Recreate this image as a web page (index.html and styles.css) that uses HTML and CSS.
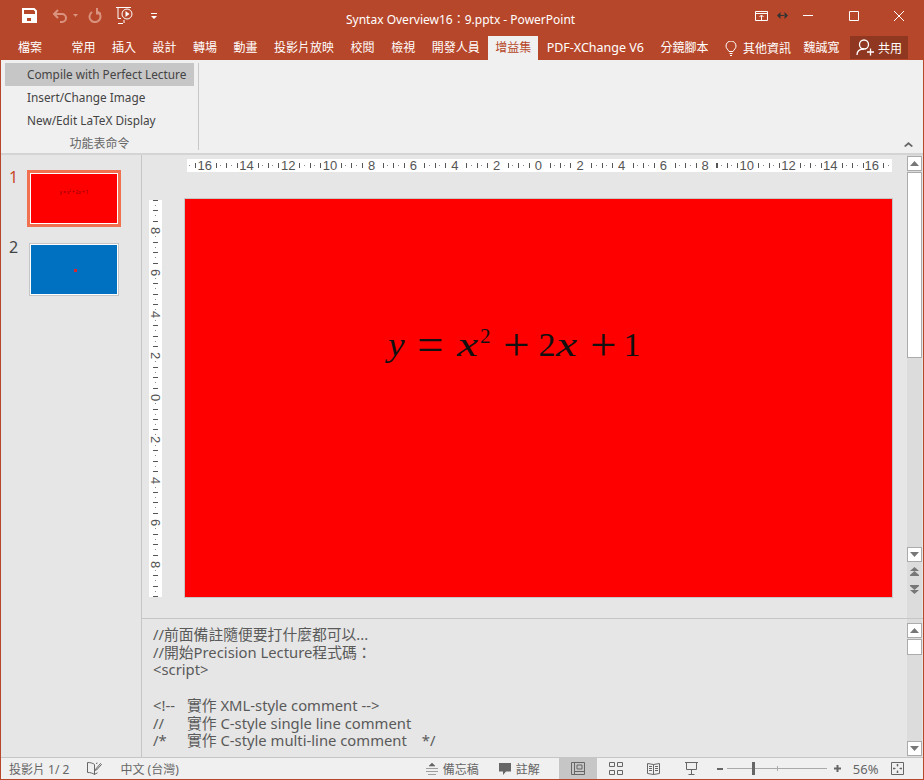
FILE: index.html
```html
<!DOCTYPE html>
<html>
<head>
<meta charset="utf-8">
<title>Syntax Overview16 - PowerPoint</title>
<link rel="stylesheet" href="styles.css">
</head>
<body>
<div class="window">

  <div class="titlebar">
    <div class="qat">
      <svg class="qat-save" width="15" height="15" viewBox="0 0 15 15"><path d="M1 1h11l2 2v11H1z" fill="none" stroke="#fff" stroke-width="2"/><rect x="1" y="6" width="13" height="8" fill="#fff"/><rect x="5" y="10" width="4" height="3" fill="#b7472a"/></svg>
      <svg class="qat-undo" width="16" height="14" viewBox="0 0 16 14"><path d="M6 1 2 5l4 4M2 5h8a4 4 0 0 1 0 8H8" fill="none" stroke="#d9937f" stroke-width="2"/></svg>
      <svg class="qat-caret" width="5" height="3" viewBox="0 0 5 3"><path d="M0 0h5L2.500 3z" fill="#d9937f"/></svg>
      <svg class="qat-redo" width="14" height="15" viewBox="0 0 14 15"><path d="M4 4A5.500 5.500 0 1 0 9 3.500M9 0v5.500H13" fill="none" stroke="#d9937f" stroke-width="2"/></svg>
      <svg class="qat-show" width="17" height="19" viewBox="0 0 17 19"><path d="M0 1.500h15M2 1.500v11h3M7 17.500H2M8 14v3" fill="none" stroke="#fff"/><circle cx="11" cy="8" r="5" fill="none" stroke="#fff"/><path d="M9.500 5v6l4-3z" fill="#fff"/></svg>
      <svg class="qat-more" width="6" height="6" viewBox="0 0 6 6"><path d="M0 0h6v1H0zM0 3h6L3 6z" fill="#fff"/></svg>
    </div>
    <div class="doc-title">Syntax Overview16：9.pptx - PowerPoint</div>
    <div class="win-btns">
      <svg class="win-display" width="13" height="10" viewBox="0 0 13 10"><path d="M.5.500h12v9H.5zM0 2.500h13M6.500 9V4.500M4.500 6l2-2 2 2" fill="none" stroke="#fff"/></svg>
      <svg class="win-resize" width="11" height="7" viewBox="0 0 11 7"><path d="M3.500 0v7L0 3.500zM7.500 0v7L11 3.500zM3 3h5v1H3z" fill="#333"/></svg>
      <svg class="win-min" width="10" height="1" viewBox="0 0 10 1"><path d="M0 0h10v1H0z" fill="#fff"/></svg>
      <svg class="win-max" width="10" height="10" viewBox="0 0 10 10"><path d="M.5.500h9v9h-9z" fill="none" stroke="#fff"/></svg>
      <svg class="win-close" width="10" height="10" viewBox="0 0 10 10"><path d="M0 0l10 10M10 0 0 10" stroke="#fff" fill="none"/></svg>
    </div>
  </div>

  <div class="tabbar">
    <span class="tab tab-file">檔案</span>
    <span class="tab">常用</span>
    <span class="tab">插入</span>
    <span class="tab">設計</span>
    <span class="tab">轉場</span>
    <span class="tab">動畫</span>
    <span class="tab">投影片放映</span>
    <span class="tab">校閱</span>
    <span class="tab">檢視</span>
    <span class="tab">開發人員</span>
    <span class="tab tab-active">增益集</span>
    <span class="tab tab-latin">PDF-XChange V6</span>
    <span class="tab">分鏡腳本</span>
    <span class="tell-me">
      <svg width="12" height="15" viewBox="0 0 12 15"><path d="M4 10.500C3 8.500 1 7.500 1 5a5 5 0 0 1 10 0c0 2.500-2 3.500-3 5.500zM4.500 12.500h3M5 14.500h2" fill="none" stroke="#fff"/></svg>
      其他資訊
    </span>
    <span class="user">魏誠寬</span>
    <span class="share">
      <svg width="20" height="17" viewBox="0 0 20 17"><circle cx="8" cy="5.500" r="4.500" fill="none" stroke="#fff" stroke-width="1.300"/><path d="M1 16c0-4 3-6 7-6M11 13h7M14.500 9.500v7" fill="none" stroke="#fff" stroke-width="1.300"/></svg>
      共用
    </span>
  </div>

  <div class="ribbon">
    <div class="ribbon-group">
      <div class="ribbon-btn ribbon-btn-on">Compile with Perfect Lecture</div>
      <div class="ribbon-btn">Insert/Change Image</div>
      <div class="ribbon-btn">New/Edit LaTeX Display</div>
      <div class="group-label">功能表命令</div>
    </div>
    <svg class="ribbon-collapse" width="9" height="5" viewBox="0 0 9 5"><path d="M4.500 0 9 4 7.500 5 4.500 2.500 1.500 5 0 4z" fill="#666"/></svg>
  </div>

  <div class="main">
    <div class="thumbs">
      <div class="thumb-row">
        <span class="thumb-num thumb-num-on">1</span>
        <div class="thumb thumb-on"><div class="thumb-red"><span class="thumb-formula">y = x² + 2x + 1</span></div></div>
      </div>
      <div class="thumb-row">
        <span class="thumb-num">2</span>
        <div class="thumb"><div class="thumb-blue"><span class="thumb-mark"></span></div></div>
      </div>
    </div>

    <div class="workspace">
      <div class="editor-row">
        <div class="editor">
          <div></div>
          <div class="ruler-h">
            <span>16</span><span>14</span><span>12</span><span>10</span><span>8</span><span>6</span><span>4</span><span>2</span><span>0</span><span>2</span><span>4</span><span>6</span><span>8</span><span>10</span><span>12</span><span>14</span><span>16</span>
          </div>
          <div class="ruler-v">
            <span>8</span><span>6</span><span>4</span><span>2</span><span>0</span><span>2</span><span>4</span><span>6</span><span>8</span>
          </div>
          <div class="slide">
            <div class="formula"><i class="var-y">y</i><b class="op-eq">=</b><i class="var-x">x</i><sup>2</sup><b class="op-plus">+</b><span>2</span><i class="var-x var-x2">x</i><b class="op-plus2">+</b><span>1</span></div>
          </div>
        </div>
        <div class="scroll scroll-main">
          <div class="scroll-btn"><svg width="9" height="5" viewBox="0 0 9 5"><path d="M4.500 0 9 5H0z" fill="#777"/></svg></div>
          <div class="scroll-thumb scroll-thumb-main"></div>
          <div class="scroll-space"></div>
          <div class="scroll-btn"><svg width="9" height="5" viewBox="0 0 9 5"><path d="M0 0h9L4.500 5z" fill="#777"/></svg></div>
          <svg class="scroll-page scroll-page-up" width="9" height="9" viewBox="0 0 9 9"><path d="M4.500 0 9 4H0zM4.500 4 9 8H0zM0 8h9v1H0z" fill="#777"/></svg>
          <svg class="scroll-page scroll-page-down" width="9" height="9" viewBox="0 0 9 9"><path d="M0 0h9v1H0zM0 1h9L4.500 5zM0 5h9L4.500 9z" fill="#777"/></svg>
        </div>
      </div>

      <div class="notes-row">
        <div class="notes">
          <div>//前面備註隨便要打什麼都可以...</div>
          <div>//開始Precision Lecture程式碼：</div>
          <div>&lt;script&gt;</div>
          <div>&nbsp;</div>
          <div><span class="mark">&lt;!--</span>實作 XML-style comment --&gt;</div>
          <div><span class="mark">//</span>實作 C-style single line comment</div>
          <div><span class="mark">/*</span>實作 C-style multi-line comment<span class="end-mark">*/</span></div>
        </div>
        <div class="scroll scroll-notes">
          <div class="scroll-btn"><svg width="9" height="5" viewBox="0 0 9 5"><path d="M4.500 0 9 5H0z" fill="#777"/></svg></div>
          <div class="scroll-thumb scroll-thumb-notes"></div>
          <div class="scroll-space"></div>
          <div class="scroll-btn"><svg width="9" height="5" viewBox="0 0 9 5"><path d="M0 0h9L4.500 5z" fill="#777"/></svg></div>
        </div>
      </div>
    </div>
  </div>

  <div class="statusbar">
    <span class="status-count">投影片 1/ 2</span>
    <svg class="status-book" width="15" height="13" viewBox="0 0 15 13"><path d="M7.500 2.500C6 1 3 .500.500.500v10c3 0 5 .5 7 2 1-.8 2-1.300 3-1.600M7.500 2.500v10M9 1.500l1.500-.5M13.500 1.500l1 1L9.500 8 8.500 8.500 8.800 7z" fill="none" stroke="#666"/></svg>
    <span class="status-lang">中文 (台灣)</span>
    <span class="status-item status-notes">
      <svg width="12" height="12" viewBox="0 0 12 12"><path d="M6 0 9 3H3zM0 5.500h12M0 8.500h12M2 11.500h8" fill="#666" stroke="#666" stroke-width=".6"/></svg>
      備忘稿
    </span>
    <span class="status-item status-comments">
      <svg width="12" height="12" viewBox="0 0 12 12"><path d="M0 0h12v8.500H7L4 12V8.500H0z" fill="#666"/></svg>
      註解
    </span>
    <span class="view view-on"><svg width="14" height="13" viewBox="0 0 14 13"><path d="M.5.500h13v12H.5zM3.500.500v12M3.500 9.500h10M6 3h5v4H6z" fill="none" stroke="#666"/></svg></span>
    <span class="view"><svg width="14" height="13" viewBox="0 0 14 13"><path d="M.5.500h5v4h-5zM8.500.500h5v4h-5zM.5 8.500h5v4h-5zM8.500 8.500h5v4h-5z" fill="none" stroke="#666"/></svg></span>
    <span class="view"><svg width="13" height="13" viewBox="0 0 13 13"><path d="M.5 1.500 6.500 2.500l6-1v10l-6 1-6-1zM6.500 2.500v10M2 4.500h3M2 6.500h3M2 8.500h3M8 4.500h3M8 6.500h3M8 8.500h3" fill="none" stroke="#666"/></svg></span>
    <span class="view"><svg width="13" height="13" viewBox="0 0 13 13"><path d="M0 .500h13M1.500 1v6.500h10V1M6.500 8v4M3.500 12.500h6" fill="none" stroke="#666"/></svg></span>
    <span class="zoom-minus"></span>
    <span class="zoom-track"><span class="zoom-mid"></span><span class="zoom-thumb"></span></span>
    <svg class="zoom-plus" width="7" height="7" viewBox="0 0 7 7"><path d="M0 2.500h7v2H0zM2.500 0h2v7h-2z" fill="#666"/></svg>
    <span class="zoom-pct">56%</span>
    <svg class="status-fit" width="13" height="13" viewBox="0 0 13 13"><path d="M.5.500h12v12H.5zM6.500 2v2.500M5.500 3h2M6.500 8.500V11M5.500 10h2M2 6.500h2.500M3 5.500v2M8.500 6.500H11M10 5.500v2" fill="none" stroke="#666"/></svg>
  </div>

</div>
</body>
</html>
```

FILE: styles.css
```css
html, body {
  margin: 0;
  padding: 0;
}

body {
  font-family: "Noto Sans", "Noto Sans CJK TC", sans-serif;
  font-size: 12px;
  color: #444;
  background: #e6e6e6;
}

.window {
  width: 924px;
  height: 780px;
  box-sizing: border-box;
  border: 1px solid #b7472a;
  border-top: 0;
  display: flex;
  flex-direction: column;
  overflow: hidden;
}

/* title bar */
.titlebar {
  height: 36px;
  flex: none;
  background: #b7472a;
  color: #fff;
  display: flex;
  align-items: center;
}

.qat {
  width: 345px;
  flex: none;
  display: flex;
  align-items: center;
  padding-bottom: 5px;
  box-sizing: border-box;
}

.qat-save { margin-left: 21px; }
.qat-undo { margin-left: 15px; }
.qat-caret { margin-left: 5px; }
.qat-redo { margin-left: 10px; }
.qat-show { margin-left: 14px; }
.qat-more { margin-left: 18px; }

.doc-title {
  width: 408px;
  flex: none;
  font-size: 12px;
  padding-top: 1px;
}

.win-btns {
  display: flex;
  align-items: center;
  padding-bottom: 5px;
}

.win-display { margin-left: 1px; }
.win-resize { margin-left: 9px; }
.win-min { margin-left: 15px; }
.win-max { margin-left: 36px; }
.win-close { margin-left: 35px; }

/* tabs */
.tabbar {
  height: 24px;
  flex: none;
  background: #b7472a;
  color: #fff;
  display: flex;
  gap: 0.5px;
}

.tab {
  padding: 0 8px;
  line-height: 24px;
  white-space: nowrap;
}

.tab-file {
  padding: 0 21px 0 17px;
}

.tab-active {
  padding: 0 7px;
  background: #f0f0f0;
  color: #b7472a;
}

.tab-latin {
  font-size: 12.5px;
}

.tell-me {
  margin-left: 8px;
  display: flex;
  align-items: center;
  gap: 6px;
}

.user {
  margin-left: 12px;
  line-height: 24px;
}

.share {
  margin-left: 10px;
  width: 58px;
  height: 23px;
  background: #8f3720;
  display: flex;
  align-items: center;
  justify-content: center;
  gap: 2px;
}

/* ribbon */
.ribbon {
  height: 95px;
  flex: none;
  box-sizing: border-box;
  background: #f0f0f0;
  border-bottom: 2px solid #d4d4d4;
  display: flex;
  position: relative;
}

.ribbon-group {
  width: 198px;
  box-sizing: border-box;
  margin-top: 3px;
  margin-bottom: 3px;
  padding: 0 4px;
  border-right: 1px solid #c8c8c8;
}

.ribbon-btn {
  height: 23px;
  line-height: 23px;
  padding-left: 22px;
  color: #444;
  font-size: 11.8px;
  white-space: nowrap;
}

.ribbon-btn-on {
  background: #c6c6c6;
}

.group-label {
  margin-top: 3px;
  text-align: center;
  color: #666;
  line-height: 17px;
}

.ribbon-collapse {
  position: absolute;
  right: 10px;
  bottom: 6px;
}

/* main area */
.main {
  flex: 1;
  display: flex;
  min-height: 0;
}

.thumbs {
  width: 141px;
  flex: none;
  box-sizing: border-box;
  border-right: 1px solid #c6c6c6;
  padding-top: 15px;
}

.thumb-row {
  display: flex;
  height: 73px;
}

.thumb-num {
  width: 26px;
  text-align: center;
  font-size: 16px;
  line-height: 14px;
  margin-top: -3px;
  padding-right: 1px;
  color: #444;
  box-sizing: border-box;
}

.thumb-num-on {
  margin-top: 0;
  color: #c8492a;
}

.thumb {
  margin: 0 0 0 2px;
  width: 90px;
  height: 53px;
  box-sizing: border-box;
  border: 1px solid #c6c6c6;
  background: #fff;
  padding: 1px;
}

.thumb-on {
  margin-left: 0;
  width: 94px;
  height: 57px;
  border: 3px solid #f0704f;
}

.thumb-red {
  height: 100%;
  background: #f00;
  text-align: center;
}

.thumb-blue {
  height: 100%;
  background: #0070c0;
  position: relative;
}

.thumb-formula {
  display: block;
  font-size: 4.5px;
  line-height: 4px;
  padding-top: 16px;
  color: #800;
}

.thumb-mark {
  position: absolute;
  left: 43px;
  top: 24px;
  width: 3px;
  height: 3px;
  background: #d8262f;
}

.workspace {
  flex: 1;
  display: flex;
  flex-direction: column;
  min-width: 0;
}

.editor-row {
  height: 463px;
  flex: none;
  display: flex;
}

.editor {
  width: 765px;
  flex: none;
  box-sizing: border-box;
  padding: 4px 0 0 7px;
  display: grid;
  grid-template-columns: 13px 709px;
  grid-template-rows: 13px 400px;
  column-gap: 22px;
  row-gap: 26px;
}

/* rulers */
.ruler-h {
  margin: 0 1px 0 3px;
  height: 13px;
  display: flex;
  color: #555;
  overflow: hidden;
  background-color: #fff;
  background-image:
    repeating-linear-gradient(90deg, #555 0 1px, transparent 1px 10.43px),
    repeating-linear-gradient(90deg, #888 0 1px, transparent 1px 10.43px);
  background-repeat: no-repeat;
  background-size: 100% 5px, 100% 1px;
  background-position: 7.6px 4px, 2.4px 6px;
}

.ruler-h span {
  flex: none;
  width: 41.7px;
  text-align: center;
  font-family: "Liberation Sans", sans-serif;
  font-size: 13px;
  line-height: 13px;
  background: linear-gradient(#fff, #fff) center / 15px 100% no-repeat;
}

.ruler-h span:first-child {
  margin-left: -3px;
}

.ruler-v {
  height: 397px;
  margin-top: 2px;
  box-sizing: border-box;
  padding-top: 10px;
  display: flex;
  flex-direction: column;
  color: #555;
  overflow: hidden;
  background-color: #fff;
  background-image:
    repeating-linear-gradient(180deg, #555 0 1px, transparent 1px 10.43px),
    repeating-linear-gradient(180deg, #888 0 1px, transparent 1px 10.43px);
  background-repeat: no-repeat;
  background-size: 5px 100%, 1px 100%;
  background-position: 4px 0, 6px 5px;
}

.ruler-v span {
  flex: none;
  height: 41.7px;
  display: flex;
  align-items: center;
  justify-content: center;
  font-family: "Liberation Sans", sans-serif;
  font-size: 13px;
  line-height: 13px;
  writing-mode: vertical-rl;
  background: linear-gradient(#fff, #fff) center / 100% 9px no-repeat;
}

.slide {
  box-sizing: border-box;
  background: #f00;
  border: 1px solid #c6c6c6;
  padding: 122px 0 0 203px;
}

.formula {
  font-family: "Liberation Serif", serif;
  font-size: 34px;
  line-height: 48px;
  color: #111;
  white-space: nowrap;
}

.formula i,
.formula b {
  display: inline-block;
  font-weight: 400;
  transform-origin: left center;
}

.var-y {
  width: 17px;
  margin-right: 12px;
  transform: scaleX(1.1);
}

.var-x {
  width: 23px;
  transform: scaleX(1.4);
}

.var-x2 {
  margin-right: 11px;
}

.op-eq,
.op-plus,
.op-plus2 {
  width: 26px;
  transform: scale(1.38);
}

.op-eq { margin-right: 14px; }
.op-plus { margin-right: 10px; }
.op-plus2 { margin-right: 8px; }

.formula sup {
  font-size: 21px;
  line-height: 0;
  vertical-align: 13px;
  margin-right: 12px;
}

/* scroll bars */
.scroll {
  width: 15px;
  flex: none;
  display: flex;
  flex-direction: column;
  align-items: stretch;
  box-sizing: border-box;
  background: #dcdcdc;
}

.scroll-main {
  height: 463px;
  padding: 1px 0 24px;
}

.scroll-notes {
  height: 138px;
  padding: 4px 0 1px;
}

.scroll-btn {
  height: 15px;
  flex: none;
  box-sizing: border-box;
  background: #fff;
  border: 1px solid #ababab;
  display: flex;
  align-items: center;
  justify-content: center;
}

.scroll-thumb {
  flex: none;
  box-sizing: border-box;
  background: #fff;
  border: 1px solid #ababab;
  margin-top: 1px;
}

.scroll-thumb-main { height: 186px; }
.scroll-thumb-notes { height: 16px; }

.scroll-space {
  flex: 1;
}

.scroll-page {
  align-self: center;
  flex: none;
}

.scroll-page-up { margin-top: 5px; }
.scroll-page-down { margin-top: 9px; }

/* notes */
.notes-row {
  height: 139px;
  flex: none;
  box-sizing: border-box;
  border-top: 1px solid #c6c6c6;
  display: flex;
}

.notes {
  width: 765px;
  flex: none;
  box-sizing: border-box;
  padding: 7px 0 0 11px;
  font-size: 14.8px;
  line-height: 17.7px;
  color: #5a5a5a;
  white-space: nowrap;
}

.mark {
  display: inline-block;
  width: 34px;
}

.end-mark {
  margin-left: 15px;
}

/* status bar */
.statusbar {
  height: 22px;
  flex: none;
  box-sizing: border-box;
  background: #f0f0f0;
  border-top: 1px solid #c6c6c6;
  color: #666;
  font-size: 12px;
  display: flex;
  align-items: center;
}

.status-count { margin-left: 8px; }
.status-book { margin-left: 18px; }
.status-lang { margin-left: 18px; }

.status-item {
  display: flex;
  align-items: center;
  gap: 5px;
}

.status-notes { margin-left: 247px; }
.status-comments { margin-left: 20px; }

.view {
  width: 38px;
  height: 21px;
  display: flex;
  align-items: center;
  justify-content: center;
}

.view-on {
  margin-left: 19px;
  background: #c6c6c6;
}

.zoom-minus {
  margin-left: 6px;
  width: 6px;
  height: 2px;
  background: #666;
}

.zoom-track {
  margin-left: 4px;
  width: 100px;
  height: 1px;
  background: #aaa;
  position: relative;
}

.zoom-mid {
  position: absolute;
  left: 50px;
  top: -2px;
  width: 1px;
  height: 5px;
  background: #aaa;
}

.zoom-thumb {
  position: absolute;
  left: 25px;
  top: -6px;
  width: 3px;
  height: 13px;
  background: #666;
}

.zoom-plus { margin-left: 7px; }
.zoom-pct { margin-left: 12px; font-size: 13px; }
.status-fit { margin-left: 13px; }
```
